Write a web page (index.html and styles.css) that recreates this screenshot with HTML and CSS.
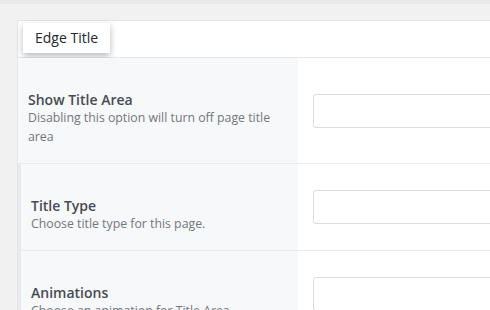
FILE: index.html
```html
<!DOCTYPE html>
<html lang="en">
<head>
  <meta charset="UTF-8">
  <title>Edge Title</title>
  <link rel="stylesheet" href="styles.css">
</head>
<body>
  <div class="top-strip"></div>

  <div class="meta-box">
    <div class="meta-header">
      <span class="meta-tab">Edge Title</span>
    </div>

    <div class="field-row first">
      <div class="field-label">
        <h4>Show Title Area</h4>
        <p>Disabling this option will turn off page title area</p>
      </div>
      <div class="field-input">
        <input type="text">
      </div>
    </div>

    <div class="field-row">
      <div class="field-label">
        <h4>Title Type</h4>
        <p>Choose title type for this page.</p>
      </div>
      <div class="field-input">
        <input type="text">
      </div>
    </div>

    <div class="field-row">
      <div class="field-label">
        <h4>Animations</h4>
        <p>Choose an animation for Title Area</p>
      </div>
      <div class="field-input">
        <input type="text">
      </div>
    </div>
  </div>
</body>
</html>
```

FILE: styles.css
```css
* {
  box-sizing: border-box;
}
body {
  margin: 0;
  background-color: #f1f1f1;
  font-family: "Open Sans", sans-serif;
  color: #32373c;
  overflow: hidden;
}
.top-strip {
  height: 4px;
  background-color: #e9e9e9;
  margin-bottom: 16px;
}
.meta-box {
  margin-left: 17px;
  background-color: #fff;
  border: 1px solid #e5e5e5;
  border-right: none;
}
.meta-header {
  height: 37px;
  padding: 2px 0 0 5px;
  border-bottom: 1px solid #e8e8e8;
}
.meta-tab {
  display: inline-block;
  height: 30px;
  padding: 0 12px;
  line-height: 30px;
  font-size: 14px;
  color: #23282d;
  background-color: #fff;
  box-shadow: 0 3px 7px rgba(0,0,0,0.28);
}
.field-row {
  display: flex;
  align-items: center;
  border-bottom: 1px solid #ebebeb;
  border-left: 3px solid #e8eaee;
}
.field-row.first {
  border-left: none;
}
.field-label {
  flex: none;
  width: 280px;
  align-self: stretch;
  padding: 33px 10px 17px 10px;
  background-color: #f7f8fa;
}
.field-row:not(.first) .field-label {
  width: 277px;
}
.field-label h4 {
  margin: 0;
  font-size: 14px;
  font-weight: 600;
  line-height: 17px;
  color: #474c52;
}
.field-label p {
  margin: 0;
  font-size: 12.3px;
  line-height: 19px;
  color: #72777c;
}
.field-input {
  flex: 1;
  min-width: 0;
  padding-left: 15px;
}
.field-input input {
  display: block;
  width: 300px;
  height: 34px;
  border: 1px solid #dcdcdc;
  border-radius: 3px;
  background-color: #fff;
}
```
